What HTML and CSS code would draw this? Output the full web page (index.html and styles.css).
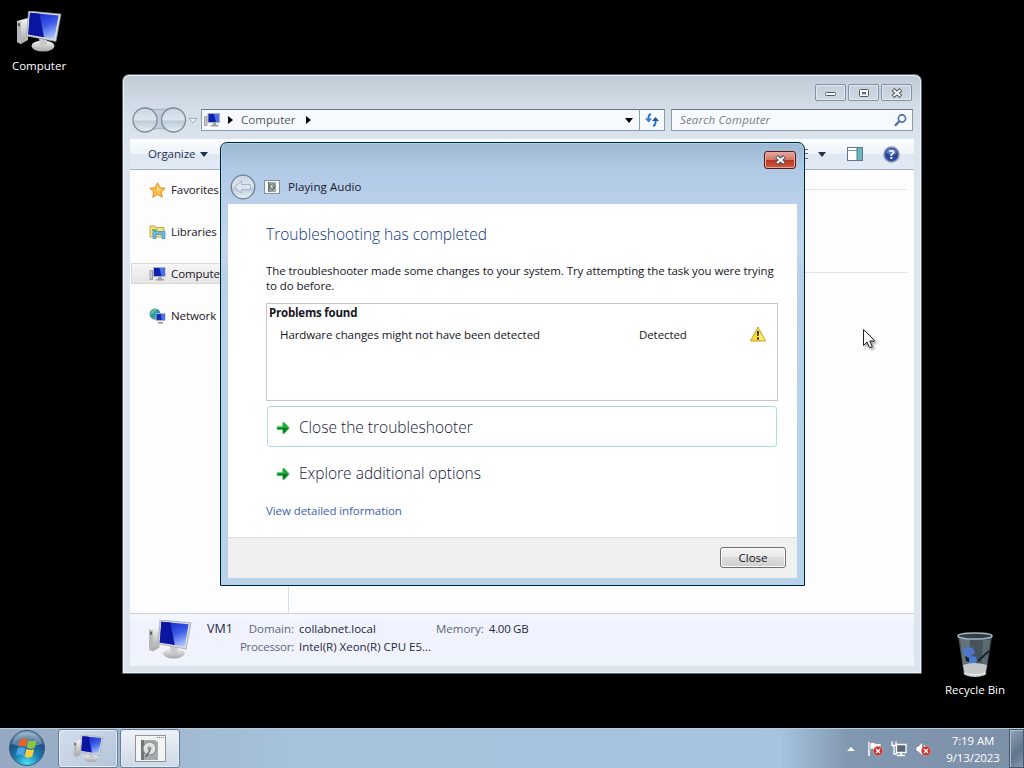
FILE: index.html
```
<!DOCTYPE html>
<html lang="en">
<head>
    <meta charset="UTF-8">
    <title>VM1</title>
    <link rel="stylesheet" href="styles.css">
</head>
<body>
    <!-- shared icons -->
    <svg class="defs" width="0" height="0">
        <defs>
            <linearGradient id="screen" x1="0.3" y1="0" x2="0.8" y2="1">
                <stop offset="0" stop-color="#1428cc"/>
                <stop offset="0.5" stop-color="#3c5ce6"/>
                <stop offset="1" stop-color="#b4ccff"/>
            </linearGradient>
            <linearGradient id="metal" x1="0" y1="0" x2="0" y2="1">
                <stop offset="0" stop-color="#f4f4f2"/>
                <stop offset="1" stop-color="#a4a6a8"/>
            </linearGradient>
            <linearGradient id="glass" x1="0" y1="0" x2="0" y2="1">
                <stop offset="0" stop-color="#c9d6e2"/>
                <stop offset="0.5" stop-color="#dde6ee"/>
                <stop offset="0.54" stop-color="#bccad6"/>
                <stop offset="1" stop-color="#e6f0f7"/>
            </linearGradient>
            <symbol id="pc" viewBox="0 0 46 42">
                <path d="M1 10l11-3v22L5 33l-4-2z" fill="url(#metal)"/>
                <path d="M1 10l4 1v22l-4-2z" fill="#b5b7b8"/>
                <path d="M2 12l2 .5v3l-2-.5z" fill="#555"/>
                <ellipse cx="27" cy="35" rx="11.500" ry="5.500" fill="url(#metal)"/>
                <path d="M23 27l8 2v6h-7z" fill="#c8cacc"/>
                <path d="M12.500 0L45 3l-5 27.500L10.500 25z" fill="#d9dbdc" stroke="#8e9194" stroke-width=".6"/>
                <path d="M14 1.800l28.500 2.700L38.300 28 12.200 23.500z" fill="url(#screen)"/>
                <path d="M14 1.800l9.500.9L28 26.200l-15.800-2.700z" fill="#0a16a0"/>
            </symbol>
            <symbol id="pc-small" viewBox="0 0 16 16">
                <path d="M.5 4.500h2.500v9h-2.500z" fill="#c9ccd0" stroke="#80868c" stroke-width=".7"/>
                <path d="M4 1.500h11.500v9H4z" fill="#0d20b0" stroke="#a9b0b8"/>
                <path d="M10 2h5v8h-3z" fill="#4a70ee"/>
                <path d="M9 11h3l.5 2h2v1.500H6.500V13h2z" fill="#9ca2a8"/>
            </symbol>
            <symbol id="green-arrow" viewBox="0 0 14 14">
                <path d="M1 5.300h5.500V1.300h1.800L13.500 7l-5.200 5.700H6.500v-4H1z" fill="#1fa83a" stroke="#8cd89a" stroke-width=".7"/>
                <path d="M1.500 7h11L8 11.800H7V8.300H1.500z" fill="#087a22"/>
            </symbol>
            <symbol id="error-dot" viewBox="0 0 10 10">
                <circle cx="5" cy="5" r="4.700" fill="#cf2e28" stroke="#efb0a8" stroke-width=".5"/>
                <path d="M3 3l4 4M7 3L3 7" stroke="#fff" stroke-width="1.400"/>
            </symbol>
            <symbol id="win-x" viewBox="0 0 12 10">
                <path d="M2 1.500l8 7M10 1.500l-8 7" stroke="#454f5e" stroke-width="4"/>
                <path d="M2.500 2l7 6M9.500 2l-7 6" stroke="#fff" stroke-width="2"/>
            </symbol>
        </defs>
    </svg>

    <div class="desktop-icon desktop-computer">
        <svg width="46" height="42"><use href="#pc"/></svg>
        <span class="computer-label">Computer</span>
    </div>

    <div class="desktop-icon desktop-bin">
        <svg width="38" height="46" viewBox="0 0 38 46">
            <path d="M2 4h34l-6 39q-11 4-22 0z" fill="#46525c"/>
            <path d="M4 7h10l-1 36-5-1z" fill="#64727c"/>
            <path d="M27 8h7l-5 34h-4z" fill="#5c6a74"/>
            <path d="M8 17l3-2 3 1 2-1 2 3 1 3-3 2-2 3-4-1-1-3-3-2z" fill="#4e76cc"/>
            <path d="M14 25l3-1 3 1 1 4-2 3-5 0-2-3z" fill="#4a7ad8"/>
            <path d="M22 29l11-10" stroke="#1b242c" stroke-width="2"/>
            <path d="M9 24l4 2 0 4-3-1z" fill="#15202a"/>
            <path d="M7 33q11-4 24 0l-2 10q-10 4-20 0z" fill="#c4c7c7"/>
            <path d="M8 41q11 4 22 0" stroke="#f8f8f8" fill="none"/>
            <ellipse cx="19" cy="4" rx="17" ry="3" fill="#323e46" stroke="#a4b5be" stroke-width="1.500"/>
        </svg>
        <span class="bin-label">Recycle Bin</span>
    </div>

    <div class="explorer">
        <div class="caption">
            <div class="caption-btn"><svg class="min" width="13" height="6"><rect x="1.500" y="1.500" width="10" height="3" rx="1" fill="#fff" stroke="#4b5868"/></svg></div>
            <div class="caption-btn"><svg width="12" height="10"><rect x="1.500" y="1.500" width="9" height="7" rx="1" fill="#fff" stroke="#4b5868"/><rect x="4.500" y="4.500" width="3" height="1.500" fill="#fff" stroke="#4b5868"/></svg></div>
            <div class="caption-btn"><svg width="12" height="10"><use href="#win-x"/></svg></div>
        </div>
        <div class="navbar">
            <svg class="nav-buttons" width="66" height="28" viewBox="0 0 66 28">
                <path d="M14 1.500q14 4 28 0v24q-14-6-28 0z" fill="#c0ccd7" stroke="#96a3af" stroke-width=".7"/>
                <circle cx="14" cy="14" r="12" fill="url(#glass)" stroke="#7e8b98" stroke-width="1.300"/>
                <circle cx="42.500" cy="14" r="12" fill="url(#glass)" stroke="#7e8b98" stroke-width="1.300"/>
                <path d="M58 12.500h8l-4 4.500z" fill="#eef3f7" stroke="#a2adb8"/>
            </svg>
            <div class="address">
                <svg width="16" height="16"><use href="#pc-small"/></svg>
                <i class="tri-right"></i>
                <span class="crumb">Computer</span>
                <i class="tri-right"></i>
                <i class="tri-down black"></i>
            </div>
            <div class="refresh">
                <svg width="14" height="14" viewBox="0 0 14 14">
                    <path d="M6 1Q3 2 3.500 6M8 13q3-1 2.500-6" fill="none" stroke="#2f78cc" stroke-width="2"/>
                    <path d="M0 5.500h7L3.500 9.500z" fill="#2f78cc"/>
                    <path d="M7 8h7l-3.500-4z" fill="#23549c"/>
                </svg>
            </div>
            <div class="search">
                <span class="search-hint">Search Computer</span>
                <svg width="13" height="13" viewBox="0 0 13 13">
                    <circle cx="8" cy="4.500" r="3.600" fill="#f5faff" stroke="#4a68a0" stroke-width="1.600"/>
                    <path d="M5.300 7.200L1 11.800" stroke="#4a68a0" stroke-width="2.200"/>
                </svg>
            </div>
        </div>
        <div class="client">
            <div class="toolbar">
                <span class="organize">Organize</span>
                <i class="tri-down"></i>
                <div class="view-tools">
                    <svg width="12" height="12"><path d="M8 1.500h3M8 5.500h3M8 10.500h3" stroke="#5c6c80"/></svg>
                    <i class="tri-down"></i>
                    <svg class="preview" width="16" height="14">
                        <rect x=".5" y=".5" width="15" height="13" fill="#fff" stroke="#62758a"/>
                        <path d="M1 3.500h9" stroke="#8594a4"/>
                        <rect x="10" y="1" width="5" height="12" fill="#67b7bd"/>
                        <path d="M10 1v12" stroke="#477e8c"/>
                    </svg>
                    <svg class="help" width="17" height="17" viewBox="0 0 17 17">
                        <circle cx="8.500" cy="8.500" r="7.500" fill="#2b469c" stroke="#8b96b0" stroke-width="1.500"/>
                        <path d="M3 7a5.600 5.600 0 0 1 11 0q-5 3-11 0z" fill="#5b78cc"/>
                        <text x="8.500" y="13" text-anchor="middle" class="help-mark">?</text>
                    </svg>
                </div>
            </div>
            <div class="panes">
                <div class="tree">
                    <div class="tree-item">
                        <svg width="17" height="16" viewBox="0 0 17 16"><path d="M8.500.8l2.300 4.900 5.400.6-4 3.600 1.100 5.300-4.800-2.700-4.800 2.700 1.100-5.300-4-3.600 5.400-.6z" fill="#ffbe45" stroke="#e58a25"/><path d="M8.500 3l1.500 3.800 3 .4-5 2z" fill="#ffe59a"/></svg>
                        <span>Favorites</span>
                    </div>
                    <div class="tree-item">
                        <svg width="17" height="16" viewBox="0 0 17 16"><path d="M1 2h5l1 1.500h8V13H1z" fill="#f3df83" stroke="#c5a94a"/><path d="M3 5h5v2H3z" fill="#70bb58"/><path d="M4 7.500h12v7h-3v-4H7v4H4z" fill="#6cb8e4" stroke="#4389ba" stroke-width=".7"/></svg>
                        <span>Libraries</span>
                    </div>
                    <div class="tree-item selected">
                        <svg width="17" height="16"><use href="#pc-small"/></svg>
                        <span>Computer</span>
                    </div>
                    <div class="tree-item">
                        <svg width="17" height="16" viewBox="0 0 17 16"><circle cx="6" cy="6" r="5.500" fill="#2b8fc0"/><path d="M2 2.500q4-3 6-1L5 5 1 7z" fill="#61c27c"/><path d="M3 8l3 1v2.500Q3 11 2 9z" fill="#4cae5c"/><path d="M7 5.500h9v7H7z" fill="#1330b4" stroke="#aab4c0"/><path d="M12 6h3.500v6H13z" fill="#4a72ea"/><path d="M9 14h5v1.500H9z" fill="#8b939b"/></svg>
                        <span>Network</span>
                    </div>
                </div>
                <div class="files">
                    <div class="group-line"></div>
                    <div class="group-line second"></div>
                </div>
            </div>
            <div class="details">
                <svg width="44" height="40"><use href="#pc"/></svg>
                <span class="pc-name">VM1</span>
                <div class="props">
                    <span class="key key-domain">Domain:</span><span class="val-domain">collabnet.local</span>
                    <span class="key key-cpu">Processor:</span><span class="val-cpu">Intel(R) Xeon(R) CPU E5...</span>
                </div>
                <div class="memory"><span class="key key-memory">Memory:</span><span class="val-memory">4.00 GB</span></div>
            </div>
        </div>
    </div>

    <div class="dialog">
        <div class="dialog-close"><svg width="13" height="10"><use href="#win-x"/></svg></div>
        <div class="dialog-head">
            <svg width="26" height="26" viewBox="0 0 26 26">
                <circle cx="13" cy="13" r="11.800" fill="url(#glass)" stroke="#6d7f94" stroke-width="1.300"/>
                <path d="M4.500 13l7-6v3.500h9v5h-9V19z" fill="#dce6ef" stroke="#a4b4c5"/>
            </svg>
            <svg class="audio-icon" width="16" height="14" viewBox="0 0 16 14">
                <rect x=".5" y=".5" width="15" height="13" fill="#f4f6f6" stroke="#848f98"/>
                <path d="M4 2h7l1 1v9H4z" fill="#9caaac"/>
                <path d="M4 2h1.500v10H4z" fill="#66757a"/>
                <circle cx="8.500" cy="6.500" r="2.500" fill="#dce2e2" stroke="#5c6d70"/>
                <path d="M8 6h1.500v2l-2 3" fill="none" stroke="#526266"/>
            </svg>
            <span class="dialog-title">Playing Audio</span>
        </div>
        <div class="dialog-body">
            <h1>Troubleshooting has completed</h1>
            <p><span class="line-one">The troubleshooter made some changes to your system. Try attempting the task you were trying</span><br><span class="line-two">to do before.</span></p>
            <div class="problems">
                <b>Problems found</b>
                <div class="problem">
                    <span class="problem-name">Hardware changes might not have been detected</span>
                    <span class="problem-state">Detected</span>
                    <svg width="16" height="16" viewBox="0 0 16 16">
                        <path d="M8 1L15.500 15H.5z" fill="#f8d936" stroke="#c9a51f" stroke-linejoin="round"/>
                        <path d="M8 3L14 14H8z" fill="#ffec72"/>
                        <path d="M7 5h2l-.4 5H7.400zM7 11.500h2v2H7z" fill="#241f10"/>
                    </svg>
                </div>
            </div>
            <div class="command active">
                <svg width="14" height="14"><use href="#green-arrow"/></svg>
                <span class="cmd-close">Close the troubleshooter</span>
            </div>
            <div class="command">
                <svg width="14" height="14"><use href="#green-arrow"/></svg>
                <span class="cmd-explore">Explore additional options</span>
            </div>
            <a class="detail-link">View detailed information</a>
        </div>
        <div class="dialog-foot">
            <button class="close-btn">Close</button>
        </div>
    </div>

    <svg class="cursor" width="16" height="22" viewBox="0 0 16 22">
        <path d="M1.500 1.500v16l3.600-3.500 2.400 5.800 2.800-1.200-2.500-5.600h5z" fill="#fff" stroke="#222"/>
    </svg>

    <div class="taskbar">
        <svg class="start" width="38" height="38" viewBox="0 0 38 38">
            <defs>
                <radialGradient id="orb" cx=".5" cy=".95" r=".9">
                    <stop offset="0" stop-color="#4fe3f5"/>
                    <stop offset="0.4" stop-color="#1c82b4"/>
                    <stop offset="0.75" stop-color="#1d4f80"/>
                    <stop offset="1" stop-color="#7fa0bc"/>
                </radialGradient>
            </defs>
            <circle cx="19" cy="19" r="17.500" fill="url(#orb)" stroke="#38597a"/>
            <path d="M4 15a15.500 15.500 0 0 1 30 0q-15 5-30 0z" fill="#fff" opacity=".28"/>
            <path d="M12 11q4-2.500 7.500-.5L17.700 18q-4-2-7.500 0z" fill="#e9622b"/>
            <path d="M20.700 11.200q4 2 7.800 0L26.500 19q-3.700 1.700-7.600-.3z" fill="#8cc63e"/>
            <path d="M9.900 19.300q3.700-2 7.500 0L15.500 26.500q-3.800-2-7.500 0z" fill="#4ba6e6"/>
            <path d="M18.500 20q4 2 7.700.3L24.200 27.500q-4 2-7.600-.3z" fill="#fdd03a"/>
        </svg>
        <div class="task task-pc"><svg width="31" height="28"><use href="#pc"/></svg></div>
        <div class="task active">
            <svg width="31" height="27" viewBox="0 0 31 27">
                <rect x=".5" y=".5" width="30" height="26" fill="#f3f4f4" stroke="#8d9398"/>
                <path d="M22 2.500h7" stroke="#777" stroke-dasharray="1 1"/>
                <path d="M6 5h14l3 2v18H6z" fill="#a5aaac"/>
                <path d="M6 5h3v20H6z" fill="#6f7678"/>
                <circle cx="14.500" cy="13.500" r="6.500" fill="#dfe2e2" stroke="#7d8588"/>
                <circle cx="14.500" cy="13.500" r="2" fill="#8d9496"/>
                <path d="M15 15l-4 7" stroke="#596164" stroke-width="1.500"/>
            </svg>
        </div>
        <div class="tray">
            <i class="tri-up"></i>
            <svg class="flag" width="17" height="16" viewBox="0 0 17 16">
                <path d="M2 1v14" stroke="#fff" stroke-width="1.500"/>
                <path d="M3 2q3-1.500 5 0t6 0v7q-4 2-6 0T3 9z" fill="#fff" stroke="#4e5c6c" stroke-width=".5"/>
                <use href="#error-dot" x="6" y="5" width="10" height="10"/>
            </svg>
            <svg class="net" width="16" height="16" viewBox="0 0 16 16">
                <path d="M5.500 3.500h9.500v8H5.500z" fill="#566474" stroke="#fff" stroke-width="1.300"/>
                <path d="M10 12v2M6 14.500h8" stroke="#fff" stroke-width="1.500"/>
                <path d="M1 .5v4h4v-4M3 4v9h3" fill="none" stroke="#fff" stroke-width="1.300"/>
            </svg>
            <svg class="vol" width="17" height="16" viewBox="0 0 17 16">
                <path d="M1 5.500h2L7.500 1v14L3 10.500H1z" fill="#fff" stroke="#4e5c6c" stroke-width=".5"/>
                <path d="M9 4q2 3 0 8" stroke="#fff" fill="none"/>
                <use href="#error-dot" x="6" y="5" width="10" height="10"/>
            </svg>
            <div class="clock"><span class="time">7:19 AM</span><span class="date">9/13/2023</span></div>
            <div class="show-desktop"></div>
        </div>
    </div>
</body>
</html>
```

FILE: styles.css
```
* {
    box-sizing: border-box;
}
body {
    margin: 0;
    width: 1024px;
    height: 768px;
    background: #000;
    color: #16161e;
    font-family: "Open Sans", "Noto Sans", sans-serif;
    font-size: 11.5px;
    line-height: 15px;
    overflow: hidden;
    position: relative;
}
svg {
    display: block;
    flex: none;
}
span, b, a {
    white-space: nowrap;
}
.defs {
    position: absolute;
}

/* desktop */
.desktop-icon {
    position: absolute;
    display: flex;
    flex-direction: column;
    align-items: center;
    color: #fff;
    width: 76px;
}
.desktop-computer {
    left: 1px;
    top: 11px;
    gap: 5px;
}
.desktop-bin {
    left: 937px;
    top: 632px;
    gap: 4px;
}
.cursor {
    position: absolute;
    left: 862px;
    top: 328px;
    filter: drop-shadow(2px 2px 1px rgba(0, 0, 0, 0.35));
}

/* small arrows */
.tri-right {
    border-left: 5px solid #000;
    border-top: 4px solid transparent;
    border-bottom: 4px solid transparent;
}
.tri-down {
    border-top: 5px solid #1e3250;
    border-left: 4px solid transparent;
    border-right: 4px solid transparent;
}
.tri-down.black {
    border-top-color: #000;
}
.tri-up {
    border-bottom: 4px solid #fff;
    border-left: 4px solid transparent;
    border-right: 4px solid transparent;
}

/* explorer window */
.explorer {
    position: absolute;
    left: 122px;
    top: 74px;
    width: 800px;
    height: 600px;
    padding: 0 7px 7px;
    border: 1px solid #5c646c;
    border-radius: 7px 7px 0 0;
    background: linear-gradient(#c1cbd7 0, #d3dee8 34px, #dce5ee 70px, #dce4ed 100%);
    box-shadow: inset 0 0 0 1px #edf2f6;
    display: flex;
    flex-direction: column;
}
.caption {
    height: 34px;
    padding: 9px 2px 0 0;
    display: flex;
    justify-content: flex-end;
    gap: 2px;
}
.caption-btn {
    width: 31px;
    height: 17px;
    border: 1px solid #8291a5;
    border-radius: 2px;
    box-shadow: inset 0 0 0 1px #e0e8f0;
    display: flex;
    align-items: center;
    justify-content: center;
}
.min {
    margin-top: 3px;
}
.navbar {
    height: 30px;
    display: flex;
    padding: 0 1px 8px 1px;
}
.nav-buttons {
    margin: -3px 5px 0 0;
}
.address, .refresh, .search {
    height: 22px;
    background: #f7fafc;
    border: 1px solid #8e9baa;
    border-top-color: #667587;
    display: flex;
    align-items: center;
}
.address {
    width: 439px;
    margin-left: -1px;
    padding: 0 6px 0 2px;
}
.address .tri-right {
    margin-left: 8px;
}
.crumb {
    margin: 0 2px 2px 8px;
    color: #50565e;
    letter-spacing: 0.05px;
}
.address .tri-down {
    margin-left: auto;
}
.refresh {
    width: 26px;
    margin-left: -1px;
    justify-content: center;
}
.search {
    width: 242px;
    margin-left: 6px;
    padding: 0 5px 0 8px;
    justify-content: space-between;
    color: #777e86;
    font-style: italic;
}
.search-hint {
    margin-bottom: 2px;
    letter-spacing: 0.15px;
}
.client {
    flex: 1;
    display: flex;
    flex-direction: column;
    background: #fdfdfe;
}
.toolbar {
    height: 31px;
    padding-left: 18px;
    display: flex;
    align-items: center;
    background: linear-gradient(#fbfdfe 0, #eef3fa 50%, #dfe7f3 52%, #e2eaf6 100%);
    border-bottom: 1px solid #a7b4c6;
    color: #1e3250;
}
.organize {
    margin-bottom: 2px;
    letter-spacing: -0.1px;
}
.toolbar > .tri-down {
    margin-left: 5px;
}
.view-tools {
    margin-left: auto;
    padding-right: 14px;
    display: flex;
    align-items: center;
}
.view-tools .tri-down {
    margin-left: 9px;
}
.preview {
    margin-left: 21px;
}
.help {
    margin-left: 20px;
}
.help-mark {
    font-size: 12px;
    font-weight: bold;
    fill: #fff;
}
.panes {
    flex: 1;
    display: flex;
}
.tree {
    width: 159px;
    padding-top: 9px;
    border-right: 1px solid #d5dfe8;
    display: flex;
    flex-direction: column;
    gap: 21px;
    color: #20141c;
    letter-spacing: -0.1px;
}
.tree-item {
    height: 21px;
    margin-left: 1px;
    padding-left: 17px;
    border: 1px solid transparent;
    display: flex;
    align-items: center;
    gap: 5px;
}
.tree-item.selected {
    border-color: #d9d9d9;
    background: linear-gradient(#f7f7f7, #e4e4e5);
}
.files {
    flex: 1;
    padding: 19px 7px 0 20px;
}
.group-line {
    height: 1px;
    background: #e2e3e8;
}
.group-line.second {
    margin-top: 82px;
}
.details {
    height: 53px;
    padding: 6px 0 0 18px;
    border-top: 1px solid #cbd3dd;
    background: linear-gradient(#f4f7fd 0, #f0f3fd 10px, #f0f3fd 80%, #edf5fb);
    display: flex;
    align-items: flex-start;
    color: #1e2840;
}
.pc-name {
    width: 27px;
    margin: 1px 0 0 15px;
    font-size: 12.5px;
}
.props {
    width: 202px;
    display: grid;
    grid-template-columns: 60px 1fr;
    column-gap: 5px;
    line-height: 18px;
}
.props .key {
    justify-self: end;
}
.key {
    color: #5d6678;
}
.key-cpu {
    letter-spacing: -0.2px;
}
.memory {
    display: flex;
    gap: 5px;
    line-height: 18px;
}
.val-memory {
    letter-spacing: -0.3px;
}

/* troubleshooter dialog */
.dialog {
    position: absolute;
    left: 220px;
    top: 142px;
    width: 585px;
    height: 444px;
    padding: 0 7px 7px;
    border: 1px solid #0b1c2e;
    border-radius: 7px 7px 0 0;
    background: linear-gradient(#9db8d4 0, #b0c9e5 25px, #bad0ea 60px, #c6d6ec 110px, #b9d0e8 130px, #b9d2ea 100%);
    box-shadow: inset 0 0 0 1px #9cdcf6;
    display: flex;
    flex-direction: column;
}
.dialog-close {
    align-self: flex-end;
    width: 32px;
    height: 18px;
    margin: 8px 1px 0 0;
    border: 1px solid #55191c;
    border-radius: 3px;
    background: linear-gradient(#e5a89c 0, #d47969 48%, #b83520 50%, #cc5b3f 100%);
    box-shadow: inset 0 0 0 1px #e9a798;
    display: flex;
    align-items: center;
    justify-content: center;
}
.dialog-head {
    height: 35px;
    padding-left: 2px;
    display: flex;
    align-items: center;
}
.audio-icon {
    margin: 0 8px;
}
.dialog-body {
    height: 333px;
    padding: 19px 19px 0 38px;
    background: #fff;
}
.dialog-title {
    color: #16182c;
    letter-spacing: 0.1px;
}
h1 {
    margin: 0;
    font-size: 15.5px;
    font-weight: 300;
    line-height: 22px;
    color: #12347c;
}
p {
    margin: 18px 0 10px;
    letter-spacing: -0.085px;
}
.problems {
    width: 512px;
    height: 98px;
    padding: 1px 11px 0 2px;
    border: 1px solid #c3c7cb;
}
.problems b {
    letter-spacing: -0.2px;
}
.problem {
    margin: 6px 0 0 11px;
    display: flex;
    align-items: center;
    letter-spacing: -0.09px;
}
.problem-name {
    width: 359px;
}
.problem-state {
    width: 111px;
}
.command {
    width: 510px;
    height: 41px;
    margin: 5px 0 0 1px;
    padding: 2px 0 0 8px;
    border: 1px solid transparent;
    border-radius: 3px;
    display: flex;
    align-items: center;
    gap: 9px;
    font-size: 15.5px;
    font-weight: 300;
    color: #141a3c;
}
.command.active {
    border-color: #a9dde2;
}
.detail-link {
    display: block;
    margin-top: 10px;
    color: #3d5fae;
    letter-spacing: -0.08px;
}
.dialog-foot {
    flex: 1;
    padding-right: 11px;
    background: #f0f0f0;
    border-top: 1px solid #dfdfdf;
    display: flex;
    align-items: center;
    justify-content: flex-end;
}
.close-btn {
    width: 66px;
    height: 21px;
    margin-bottom: 2px;
    padding: 0;
    border: 1px solid #707070;
    border-radius: 3px;
    background: linear-gradient(#f2f2f2 0, #ebebeb 48%, #dddddd 50%, #cfcfcf 100%);
    box-shadow: inset 0 0 0 1px #fafafa;
    font: inherit;
    line-height: 17px;
    color: #16161e;
}

/* taskbar */
.taskbar {
    position: absolute;
    left: 0;
    bottom: 0;
    width: 100%;
    height: 40px;
    padding-left: 8px;
    border-top: 1px solid #b5cbe0;
    background: linear-gradient(90deg, #97a9c2 0, #a2b9d2 180px, #a6c2dd 300px, #a6c3df 780px, #8197b0 850px, #7c8fa7 100%);
    display: flex;
}
.task {
    width: 60px;
    margin: 0 1px;
    border: 1px solid #687e98;
    border-radius: 3px;
    background: linear-gradient(135deg, #d3deeb, #b3c5da);
    box-shadow: inset 0 0 0 1px #e3ebf4;
    display: flex;
    align-items: center;
    justify-content: center;
}
.task-pc {
    margin-left: 14px;
}
.task.active {
    background: linear-gradient(#eef2f7, #cdd9e6);
}
.tray {
    margin-left: auto;
    display: flex;
    align-items: center;
    color: #fff;
}
.flag {
    margin-left: 12px;
}
.net {
    margin-left: 7px;
}
.vol {
    margin-left: 8px;
}
.clock {
    width: 68px;
    margin-left: 7px;
    display: flex;
    flex-direction: column;
    align-items: center;
    line-height: 17px;
    letter-spacing: -0.1px;
}
.show-desktop {
    width: 15px;
    height: 39px;
    margin-left: 2px;
    border: 1px solid #47586c;
    background: linear-gradient(135deg, #92a4b8, #5f738a 60%, #8698ac);
    box-shadow: inset 1px 1px 0 #b2c0ce;
}
.start {
    margin: 0 -2px 0 0;
}
```
